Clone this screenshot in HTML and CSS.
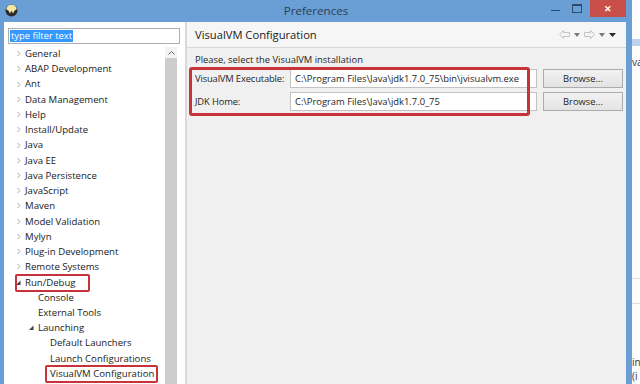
FILE: index.html
```html
<!DOCTYPE html>
<html lang="en">
<head>
  <meta charset="UTF-8">
  <title>Preferences</title>
  <link rel="stylesheet" href="styles.css">
</head>
<body>
  <!-- Window behind, only its left edge shows -->
  <div class="back-window">
    <div class="back-band"></div>
    <span class="back-text bt-1">va</span>
    <div class="back-line bl-1"></div>
    <div class="back-line bl-2"></div>
    <span class="back-text bt-2">in</span>
    <span class="back-text bt-3">(i</span>
  </div>

  <!-- Preferences dialog -->
  <div class="window">
    <div class="titlebar">
      <svg class="app-icon" width="13" height="13" viewBox="0 0 13 13">
        <circle cx="6.5" cy="6.5" r="6" fill="#2b2b2b"/>
        <path d="M1.2 5.2 A5.4 5.4 0 0 1 11.8 5.2 L9.6 6.4 L8 9.6 L6.5 6.8 L5 9.6 L3.4 6.4 Z" fill="#f1e6a8"/>
      </svg>
      <span class="title">Preferences</span>
      <div class="win-controls">
        <span class="wc-min"></span>
        <span class="wc-max"></span>
        <span class="wc-close">&#x2715;</span>
      </div>
    </div>

    <div class="frame">
      <div class="left">
        <div class="filter"><span class="filter-sel">type filter text</span></div>
        <div class="tree-wrap">
          <ul class="tree">
            <li><i class="tw closed"></i>General</li>
            <li><i class="tw closed"></i>ABAP Development</li>
            <li><i class="tw closed"></i>Ant</li>
            <li><i class="tw closed"></i>Data Management</li>
            <li><i class="tw closed"></i>Help</li>
            <li><i class="tw closed"></i>Install/Update</li>
            <li><i class="tw closed"></i>Java</li>
            <li><i class="tw closed"></i>Java EE</li>
            <li><i class="tw closed"></i>Java Persistence</li>
            <li><i class="tw closed"></i>JavaScript</li>
            <li><i class="tw closed"></i>Maven</li>
            <li><i class="tw closed"></i>Model Validation</li>
            <li><i class="tw closed"></i>Mylyn</li>
            <li><i class="tw closed"></i>Plug-in Development</li>
            <li><i class="tw closed"></i>Remote Systems</li>
            <li><span class="mark mark-run"><i class="tw open"></i>Run/Debug</span></li>
            <li class="lvl1"><i class="tw"></i>Console</li>
            <li class="lvl1"><i class="tw"></i>External Tools</li>
            <li class="lvl1"><i class="tw open"></i>Launching</li>
            <li class="lvl2"><i class="tw"></i>Default Launchers</li>
            <li class="lvl2"><i class="tw"></i>Launch Configurations</li>
            <li class="lvl2"><i class="tw"></i><span class="mark mark-vvm">VisualVM Configuration</span></li>
          </ul>
          <div class="scrollbar">
            <div class="sb-up">
              <svg width="7" height="4" viewBox="0 0 7 4"><path d="M0.5 3.5 L3.5 0.5 L6.5 3.5" fill="none" stroke="#606060" stroke-width="1"/></svg>
            </div>
            <div class="sb-thumb"></div>
          </div>
        </div>
      </div>

      <div class="right">
        <div class="page-head">
          <span class="page-title">VisualVM Configuration</span>
          <div class="nav">
            <svg width="11" height="9" viewBox="0 0 11 9"><path d="M0.5 4.5 L4.5 0.5 L4.5 2.5 L10.5 2.5 L10.5 6.5 L4.5 6.5 L4.5 8.5 Z" fill="#f4f4f4" stroke="#c4c4c4"/></svg>
            <svg width="6" height="4" viewBox="0 0 6 4"><path d="M0 0 L6 0 L3 4 Z" fill="#7a7a7a"/></svg>
            <svg width="11" height="9" viewBox="0 0 11 9"><path d="M10.5 4.5 L6.5 0.5 L6.5 2.5 L0.5 2.5 L0.5 6.5 L6.5 6.5 L6.5 8.5 Z" fill="#f4f4f4" stroke="#c4c4c4"/></svg>
            <svg width="6" height="4" viewBox="0 0 6 4"><path d="M0 0 L6 0 L3 4 Z" fill="#7a7a7a"/></svg>
            <svg width="7" height="4" viewBox="0 0 7 4"><path d="M0 0 L7 0 L3.5 4 Z" fill="#2a2a2a"/></svg>
          </div>
        </div>
        <div class="page-body">
          <p class="intro">Please, select the VisualVM installation</p>
          <div class="form">
            <label>VisualVM Executable:</label>
            <div class="field">C:\Program Files\Java\jdk1.7.0_75\bin\jvisualvm.exe</div>
            <button class="btn">Browse...</button>
            <label>JDK Home:</label>
            <div class="field">C:\Program Files\Java\jdk1.7.0_75</div>
            <button class="btn">Browse...</button>
          </div>
          <!-- red annotation round the two rows -->
          <div class="mark-box"></div>
        </div>
      </div>
    </div>
  </div>
</body>
</html>
```

FILE: styles.css
```css
html, body {
  margin: 0;
  padding: 0;
}
body {
  width: 640px;
  height: 384px;
  overflow: hidden;
  position: relative;
  background: #fff;
  font-family: 'Segoe UI', 'Open Sans', Arial, sans-serif;
  font-size: 9.4px;
  color: #1e1e1e;
}
/* Window behind the dialog */
.back-window {
  position: absolute;
  inset: 0;
  background: #fdfdfd;
}
.back-band {
  position: absolute;
  left: 632px;
  top: 39px;
  width: 8px;
  height: 7px;
  background: #bcd2ed;
}
.back-line {
  position: absolute;
  left: 632px;
  width: 8px;
  height: 1px;
  background: #dedede;
}
.bl-1 { top: 278px; }
.bl-2 { top: 303px; }
.back-text {
  position: absolute;
  left: 632px;
  font-size: 10px;
  line-height: 12px;
  color: #333;
}
.bt-1 { top: 56px; }
.bt-2 { top: 356px; }
.bt-3 { top: 370px; }

/* Dialog */
.window {
  position: absolute;
  left: 0;
  top: 0;
  width: 632px;
  height: 384px;
  background: #6a9fd5;
  display: flex;
  flex-direction: column;
}
.titlebar {
  height: 22px;
  display: flex;
  align-items: flex-start;
  position: relative;
}
.app-icon {
  margin: 4px 0 0 5px;
}
.title {
  position: absolute;
  left: 0;
  right: 0;
  top: 3px;
  text-align: center;
  font-size: 11.6px;
  line-height: 16px;
  color: #2d3d52;
}
.win-controls {
  margin-left: auto;
  margin-right: 6px;
  display: flex;
  align-items: flex-start;
  position: relative;
}
.wc-min {
  width: 9px;
  height: 1px;
  background: #2f4b6c;
  margin: 10px 12px 0 0;
}
.wc-max {
  width: 8px;
  height: 6px;
  border: 1px solid #2f4b6c;
  border-top-width: 2px;
  margin: 4px 8px 0 0;
}
.wc-close {
  width: 36px;
  height: 17px;
  background: #c94f4a;
  color: #fff;
  font-size: 9px;
  font-weight: bold;
  line-height: 17px;
  text-align: center;
}

.frame {
  flex: 1;
  display: flex;
  margin: 0 6px 0 4px;
  min-height: 0;
}

/* Left: filter and tree */
.left {
  width: 181px;
  background: #fff;
  padding: 6px 0 0 4px;
  box-sizing: border-box;
  display: flex;
  flex-direction: column;
}
.filter {
  width: 172px;
  height: 16px;
  box-sizing: border-box;
  border: 1px solid #abadb3;
  padding: 1px;
  display: flex;
}
.filter-sel {
  background: #3399ff;
  color: #fff;
  font-size: 9.4px;
  line-height: 12px;
  padding: 0 1px;
}
.tree-wrap {
  flex: 1;
  display: flex;
  margin-top: 2px;
  min-height: 0;
}
.tree {
  flex: 1;
  list-style: none;
  margin: 0;
  padding: 0;
  font-size: 9.6px;
  color: #1a1a1a;
}
.tree li {
  height: 15.24px;
  line-height: 15.24px;
  display: flex;
  align-items: center;
  padding-left: 6px;
  white-space: nowrap;
}
.tree li.lvl1 { padding-left: 19px; }
.tree li.lvl2 { padding-left: 31px; }
.tw {
  width: 11px;
  height: 15px;
  flex: none;
  background-repeat: no-repeat;
}
.tw.closed {
  background-image: url("data:image/svg+xml;utf8,<svg xmlns='http://www.w3.org/2000/svg' width='11' height='15'><path d='M3.5 5 L6 7.5 L3.5 10' fill='none' stroke='%23a8a8a8' stroke-width='1'/></svg>");
}
.tw.open {
  background-image: url("data:image/svg+xml;utf8,<svg xmlns='http://www.w3.org/2000/svg' width='11' height='15'><path d='M6.5 5.5 L6.5 10 L2 10 Z' fill='%23404040'/></svg>");
}
.mark {
  position: relative;
  display: flex;
  align-items: center;
}
.mark::after {
  content: "";
  position: absolute;
  border: 2.5px solid #c8323a;
  border-radius: 2px;
}
.mark-run::after {
  left: 1px;
  right: -14px;
  top: -1px;
  bottom: -2px;
}
.mark-vvm::after {
  left: -5px;
  right: -4px;
  top: -1px;
  bottom: -2px;
}
.scrollbar {
  width: 12px;
  margin-right: 8px;
  display: flex;
  flex-direction: column;
  margin-top: 1px;
}
.sb-up {
  height: 11px;
  display: flex;
  align-items: center;
  justify-content: center;
  background: #f4f4f4;
}
.sb-thumb {
  flex: 1;
  background: #cdcdcd;
}

/* Right: the preference page */
.right {
  flex: 1;
  background: #f0f0f0;
  border-left: 2px solid #d9d9d9;
  display: flex;
  flex-direction: column;
}
.page-head {
  height: 26px;
  box-sizing: border-box;
  border-bottom: 1px solid #d6d6d6;
  background: #f6f6f6;
  display: flex;
  align-items: center;
  padding: 0 10px 0 8px;
}
.page-title {
  font-size: 11.2px;
  color: #1a1a1a;
}
.nav {
  margin-left: auto;
  display: flex;
  align-items: center;
  gap: 4px;
}
.page-body {
  position: relative;
  flex: 1;
  padding: 4px 3px 0 8px;
}
.intro {
  margin: 0;
  line-height: 15px;
}
.form {
  display: grid;
  grid-template-columns: 89px 1fr 80px;
  grid-auto-rows: 19px;
  column-gap: 6px;
  row-gap: 4px;
  margin-top: 2px;
  align-items: center;
}
.form label {
  line-height: 19px;
  white-space: nowrap;
  letter-spacing: -0.15px;
}
.field {
  height: 19px;
  box-sizing: border-box;
  background: #fff;
  border: 1px solid #c2c2c2;
  padding-left: 4px;
  line-height: 17px;
  white-space: nowrap;
  overflow: hidden;
}
.btn {
  height: 19px;
  box-sizing: border-box;
  border: 1px solid #acacac;
  background: linear-gradient(#f2f2f2, #e3e3e3);
  font-family: inherit;
  font-size: 9.4px;
  color: #1e1e1e;
  padding: 0;
}
.mark-box {
  position: absolute;
  left: 2px;
  top: 19px;
  width: 341px;
  height: 49px;
  box-sizing: border-box;
  border: 3px solid #c8323a;
  border-radius: 3px;
}
```
